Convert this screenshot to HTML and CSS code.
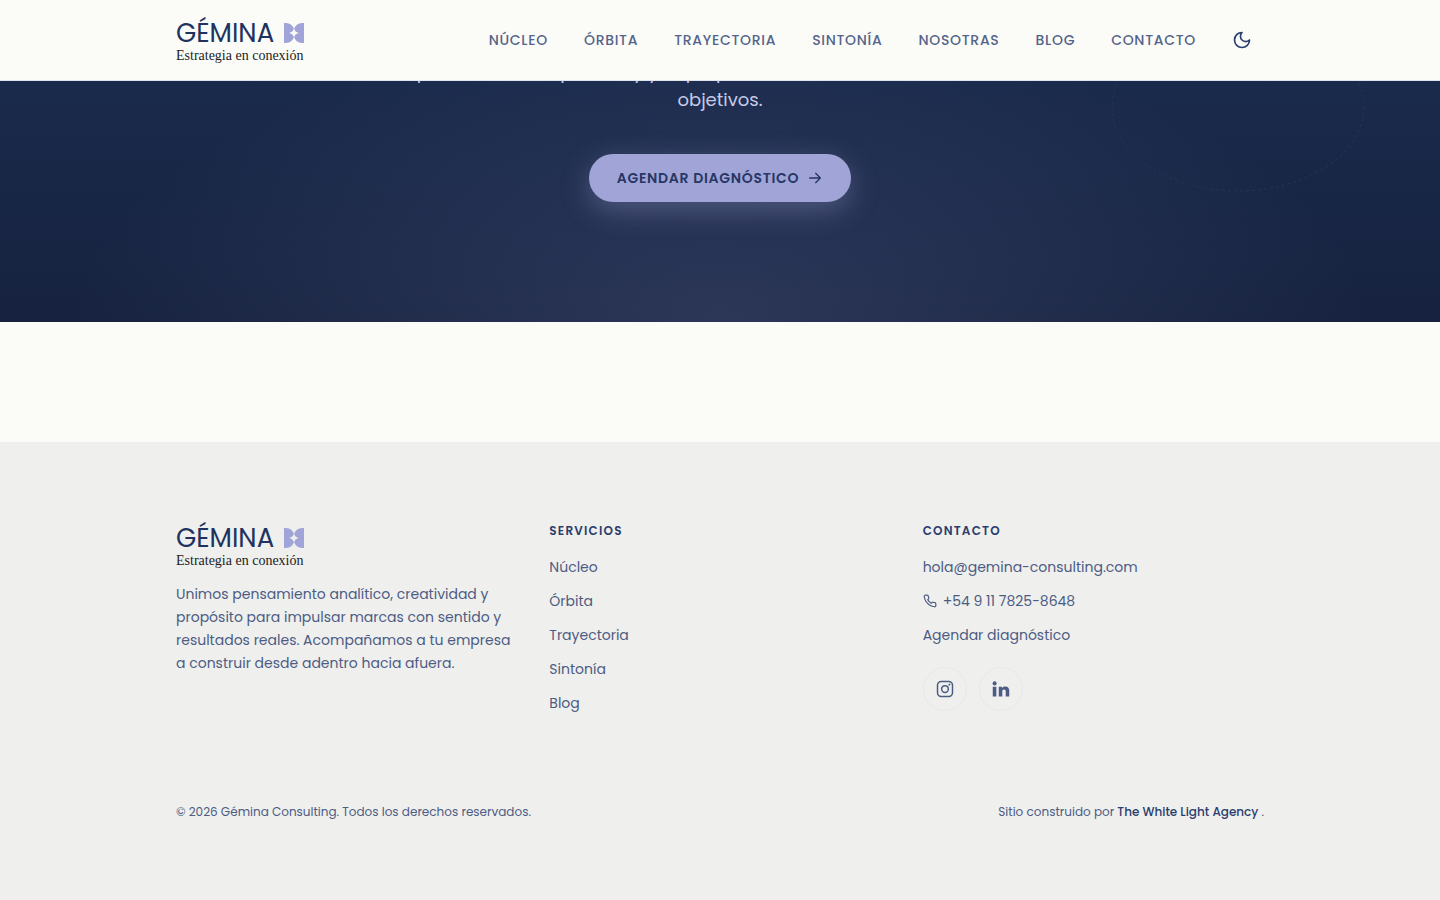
FILE: index.html
```html
<!DOCTYPE html>
<html lang="es">
<head>
    <meta charset="UTF-8">
    <meta name="viewport" content="width=device-width, initial-scale=1.0">
    <title>Gémina Consulting</title>
    <link rel="stylesheet" href="styles.css">
</head>
<body>
    <!-- Header -->
    <header class="site-header">
        <div class="container header-inner">
            <a href="#" class="logo">
                <span class="logo-row">
                    <span class="logo-name">GÉMINA</span>
                    <svg class="logo-mark" viewBox="0 0 20 20" aria-hidden="true">
                        <path d="M0 0H2C6 .3 9 2.500 10 6C11 2.500 14 .3 18 0H20V20H18C14 19.700 11 17.500 10 14C9 17.500 6 19.700 2 20H0Z"/>
                        <path class="logo-star" d="M10 5C10.800 8.300 12 9.200 15 10C12 10.800 10.800 11.700 10 15C9.200 11.700 8 10.800 5 10C8 9.200 9.200 8.300 10 5Z"/>
                    </svg>
                </span>
                <span class="logo-tagline">Estrategia en conexión</span>
            </a>
            <nav class="main-nav">
                <a href="#nucleo">Núcleo</a>
                <a href="#orbita">Órbita</a>
                <a href="#trayectoria">Trayectoria</a>
                <a href="#sintonia">Sintonía</a>
                <a href="#nosotras">Nosotras</a>
                <a href="#blog">Blog</a>
                <a href="#contacto">Contacto</a>
                <button type="button" class="theme-toggle" aria-label="Cambiar tema">
                    <svg viewBox="0 0 24 24" aria-hidden="true"><path d="M12 3a6 6 0 0 0 9 9 9 9 0 1 1-9-9Z"/></svg>
                </button>
            </nav>
        </div>
    </header>

    <main>
        <!-- Call to action -->
        <section class="cta">
            <svg class="cta-orbit" viewBox="0 0 254 170" aria-hidden="true"><ellipse cx="127" cy="85" rx="126" ry="84"/></svg>
            <p class="cta-text">Exploramos cada paso hoy y te proponemos un camino ideal hacia tus objetivos.</p>
            <a href="#agendar" class="btn">
                Agendar diagnóstico
                <svg viewBox="0 0 24 24" aria-hidden="true"><path d="M4 12h16M13 5l7 7-7 7"/></svg>
            </a>
        </section>
    </main>

    <!-- Footer -->
    <footer class="site-footer">
        <div class="container">
            <div class="footer-grid">
                <div class="footer-about">
                    <a href="#" class="logo">
                        <span class="logo-row">
                            <span class="logo-name">GÉMINA</span>
                            <svg class="logo-mark" viewBox="0 0 20 20" aria-hidden="true">
                                <path d="M0 0H2C6 .3 9 2.500 10 6C11 2.500 14 .3 18 0H20V20H18C14 19.700 11 17.500 10 14C9 17.500 6 19.700 2 20H0Z"/>
                                <path class="logo-star" d="M10 5C10.800 8.300 12 9.200 15 10C12 10.800 10.800 11.700 10 15C9.200 11.700 8 10.800 5 10C8 9.200 9.200 8.300 10 5Z"/>
                            </svg>
                        </span>
                        <span class="logo-tagline">Estrategia en conexión</span>
                    </a>
                    <p>Unimos pensamiento analítico, creatividad y propósito para impulsar marcas con sentido y resultados reales. Acompañamos a tu empresa a construir desde adentro hacia afuera.</p>
                </div>
                <div>
                    <h2>Servicios</h2>
                    <ul>
                        <li><a href="#nucleo">Núcleo</a></li>
                        <li><a href="#orbita">Órbita</a></li>
                        <li><a href="#trayectoria">Trayectoria</a></li>
                        <li><a href="#sintonia">Sintonía</a></li>
                        <li><a href="#blog">Blog</a></li>
                    </ul>
                </div>
                <div>
                    <h2>Contacto</h2>
                    <ul>
                        <li><a href="mailto:hola@gemina-consulting.com">hola@gemina-consulting.com</a></li>
                        <li>
                            <a href="tel:+5491178258648" class="phone">
                                <svg viewBox="0 0 24 24" aria-hidden="true"><path d="M22 16.920v3a2 2 0 0 1-2.180 2 19.790 19.790 0 0 1-8.630-3.070 19.500 19.500 0 0 1-6-6 19.790 19.790 0 0 1-3.070-8.670A2 2 0 0 1 4.110 2h3a2 2 0 0 1 2 1.720 12.840 12.840 0 0 0 .7 2.810 2 2 0 0 1-.45 2.110L8.090 9.910a16 16 0 0 0 6 6l1.270-1.270a2 2 0 0 1 2.110-.45 12.840 12.840 0 0 0 2.810.7A2 2 0 0 1 22 16.920z"/></svg>
                                +54 9 11 7825-8648
                            </a>
                        </li>
                        <li><a href="#agendar">Agendar diagnóstico</a></li>
                    </ul>
                    <div class="social">
                        <a href="#instagram" aria-label="Instagram">
                            <svg viewBox="0 0 24 24" aria-hidden="true"><rect x="2" y="2" width="20" height="20" rx="5"/><circle cx="12" cy="12" r="4.500"/><path d="M17.500 6.500l.8-.8"/></svg>
                        </a>
                        <a href="#linkedin" aria-label="LinkedIn">
                            <svg class="filled" viewBox="0 0 24 24" aria-hidden="true"><circle cx="3.500" cy="4.500" r="2.700"/><path d="M1 9h4.800v13H1zM9 9h4.300v1.800c.8-1.300 2.200-2.100 4.300-2.100 4 0 5.400 2.300 5.400 6V22h-4.700v-6.600c0-1.700-.5-2.800-2.100-2.800-1.700 0-2.500 1.200-2.500 2.900V22H9z"/></svg>
                        </a>
                    </div>
                </div>
            </div>
            <div class="footer-bottom">
                <p>© 2026 Gémina Consulting. Todos los derechos reservados.</p>
                <p>Sitio construido por <a href="#agency">The White Light Agency</a> .</p>
            </div>
        </div>
    </footer>
</body>
</html>
```
FILE: styles.css
```css
/* General Reset */
* {
    margin: 0;
    padding: 0;
    box-sizing: border-box;
}

body {
    font-family: 'Poppins', 'Inter', sans-serif;
    font-size: 14px;
    line-height: 23px;
    color: #4c5c84;
    background: #fbfcf7;
}

a {
    color: inherit;
    text-decoration: none;
}

ul {
    list-style: none;
}

svg {
    flex-shrink: 0;
    fill: none;
    stroke: currentColor;
    stroke-width: 2;
    stroke-linecap: round;
    stroke-linejoin: round;
}

.container {
    max-width: 1152px;
    margin: 0 auto;
    padding: 0 32px;
}

/* Header */
.site-header {
    position: fixed;
    top: 0;
    left: 0;
    right: 0;
    z-index: 10;
    background: #fbfcf7;
    border-bottom: 1px solid #dfe5ee;
}

.header-inner {
    display: flex;
    justify-content: space-between;
    align-items: center;
    height: 80px;
}

/* Logo */
.logo {
    display: inline-flex;
    flex-direction: column;
    vertical-align: top;
}

.logo-row {
    display: flex;
    align-items: center;
    gap: 10px;
}

.logo-name {
    font-size: 26px;
    line-height: 32px;
    color: #20335f;
}

.logo-mark {
    width: 20px;
    height: 20px;
    fill: #a0a4d8;
    stroke: none;
}

.logo-star {
    fill: #fbfcf7;
}

.logo-tagline {
    font-family: 'Liberation Serif', serif;
    font-size: 14px;
    line-height: 14px;
    color: #1c1c1c;
}

/* Navigation */
.main-nav {
    display: flex;
    align-items: center;
    gap: 36px;
    font-weight: 500;
    letter-spacing: 0.05em;
    text-transform: uppercase;
    color: #55648a;
}

.theme-toggle {
    display: flex;
    margin-right: 12px;
    border: 0;
    background: none;
    color: #2a3d6e;
    cursor: pointer;
}

.theme-toggle svg {
    width: 20px;
    height: 20px;
}

/* Call to action */
.cta {
    position: relative;
    display: flex;
    flex-direction: column;
    align-items: center;
    gap: 40px;
    padding: 58px 32px 120px;
    overflow: hidden;
    background:
        radial-gradient(ellipse at 50% 100%, rgba(160, 164, 216, 0.16), transparent 64%),
        linear-gradient(#1c2d50, #16223f);
}

.cta-orbit {
    position: absolute;
    top: 22px;
    right: 75px;
    width: 254px;
    height: 170px;
    color: #22365a;
    stroke-width: 1;
    stroke-dasharray: 2 4;
}

.cta-text {
    max-width: 660px;
    font-size: 18px;
    line-height: 28px;
    text-align: center;
    color: #c6cae8;
}

.btn {
    display: inline-flex;
    align-items: center;
    gap: 8px;
    height: 48px;
    padding: 0 28px;
    border-radius: 24px;
    background: #a0a4d6;
    box-shadow: 0 8px 28px rgba(160, 164, 216, 0.35);
    font-weight: 600;
    letter-spacing: 0.05em;
    text-transform: uppercase;
    color: #263765;
}

.btn svg {
    width: 16px;
    height: 16px;
}

/* Footer */
.site-footer {
    margin-top: 120px;
    padding: 80px 0 78px;
    background: #efefed;
}

.site-footer .logo-star {
    fill: #efefed;
}

.footer-grid {
    display: grid;
    grid-template-columns: repeat(3, 1fr);
    gap: 32px;
    padding-bottom: 48px;
    border-bottom: 1px solid #ebedef;
}

.footer-about p {
    margin-top: 15px;
}

.footer-grid h2 {
    margin-bottom: 15px;
    font-size: 12px;
    line-height: 18px;
    font-weight: 600;
    letter-spacing: 0.1em;
    text-transform: uppercase;
    color: #2a3d6e;
}

.footer-grid li {
    margin-bottom: 10px;
    line-height: 24px;
}

.phone {
    display: flex;
    align-items: center;
    gap: 6px;
}

.phone svg {
    width: 14px;
    height: 14px;
}

.social {
    display: flex;
    gap: 12px;
    margin-top: 20px;
}

.social a {
    display: flex;
    justify-content: center;
    align-items: center;
    width: 44px;
    height: 44px;
    border: 1px solid #e6e9eb;
    border-radius: 50%;
}

.social svg {
    width: 18px;
    height: 18px;
}

.social .filled {
    fill: currentColor;
    stroke: none;
}

.footer-bottom {
    display: flex;
    justify-content: space-between;
    padding-top: 28px;
    font-size: 12px;
    line-height: 20px;
}

.footer-bottom a {
    font-weight: 500;
    color: #2a3d6e;
}
```
